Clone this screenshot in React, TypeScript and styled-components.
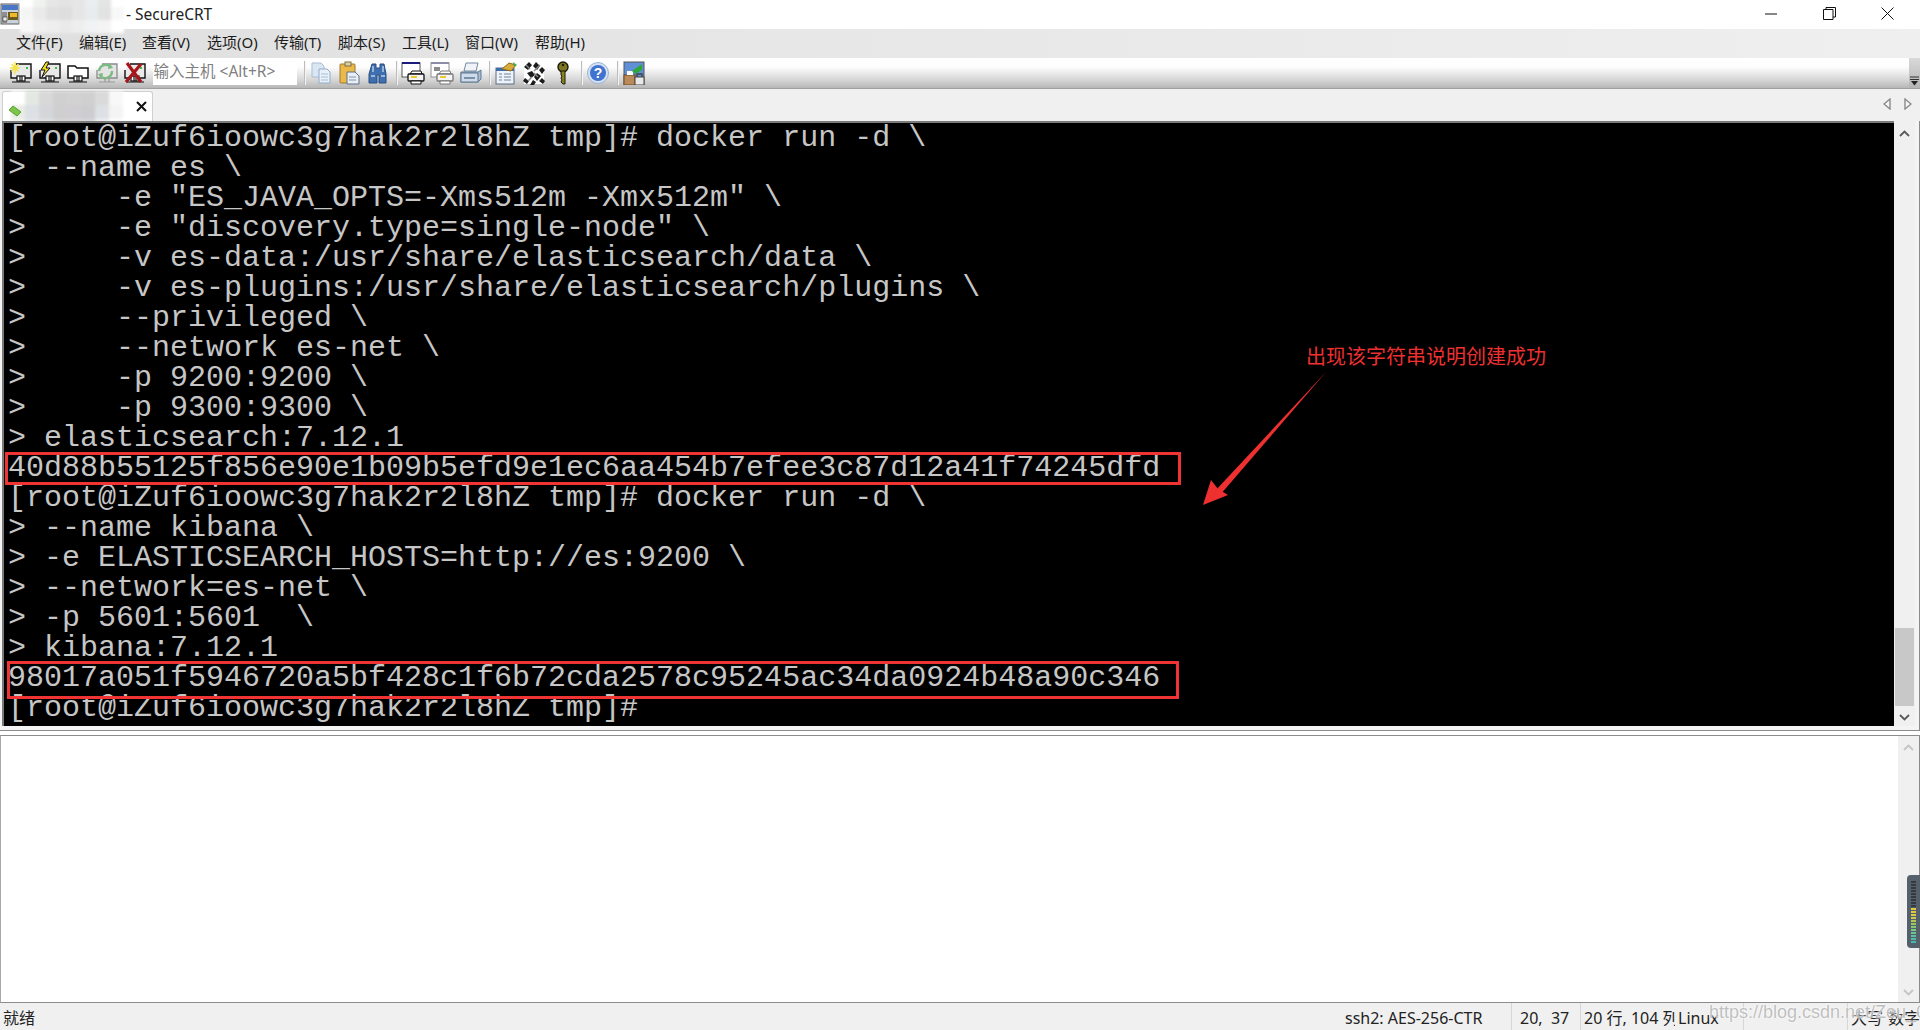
import React from 'react';
import styled, { createGlobalStyle } from 'styled-components';

const UI_FONT = `"Noto Sans", "Noto Sans CJK SC", "Liberation Sans", sans-serif`;

const GlobalStyle = createGlobalStyle`
  html, body { margin: 0; padding: 0; background: #fff; }
  #root { width: 1920px; height: 1030px; overflow: hidden; }
`;

const Root = styled.div`
  position: relative;
  display: flex;
  flex-direction: column;
  width: 1920px;
  height: 1030px;
  overflow: hidden;
  font-family: ${UI_FONT};
  color: #222;
  background: #fff;
`;

const TitleBar = styled.div`
  display: flex;
  align-items: center;
  height: 29px;
  flex: none;
  padding-bottom: 2px;
  box-sizing: border-box;
  background: #fff;
  font-size: 15.5px;
`;

const TitleText = styled.span`
  margin-left: 2px;
  white-space: pre;
`;

const WindowButtons = styled.div`
  display: flex;
  margin-left: auto;
  margin-right: 3px;
`;

const WindowButton = styled.div`
  display: flex;
  align-items: center;
  justify-content: center;
  width: 58.5px;
  height: 27px;
`;

const MenuBar = styled.div`
  display: flex;
  align-items: center;
  height: 29px;
  flex: none;
  box-sizing: border-box;
  padding: 0 0 5px 16px;
  background: linear-gradient(90deg, #dfdfdf 0, #e6e6e6 35%, #efefef 100%);
  font-size: 15px;
`;

const MenuItem = styled.span<{ $w: number }>`
  width: ${(p) => p.$w}px;
  white-space: nowrap;
  color: #1c1c1c;
`;

const ToolBar = styled.div`
  display: flex;
  align-items: center;
  position: relative;
  height: 31px;
  flex: none;
  box-sizing: border-box;
  padding-left: 7px;
  background: linear-gradient(180deg, #fff 0, #fdfdfd 30%, #d4d4d4 75%, #b6b6b6 100%);
  border-bottom: 1px solid #a0a0a0;
`;

const Tool = styled.div`
  display: flex;
  align-items: center;
  justify-content: center;
  flex: none;
  width: 28.5px;
  height: 28px;
`;

const HostInput = styled.div`
  display: flex;
  align-items: center;
  box-sizing: border-box;
  flex: none;
  width: 144px;
  height: 23px;
  margin: 0 3px 0 3px;
  padding: 0 0 5px 1px;
  background: #fff;
  color: #808080;
  font-size: 15.5px;
  white-space: pre;
`;

const ToolSep = styled.div`
  flex: none;
  width: 1px;
  height: 24px;
  margin: 0 2px 0 4px;
  background: #bdbdbd;
  box-shadow: 1px 0 0 #f4f4f4;
`;

const Grip = styled.div`
  display: flex;
  align-items: flex-end;
  justify-content: center;
  width: 11px;
  height: 30px;
  margin-left: auto;
  padding-bottom: 2px;
  box-sizing: border-box;
  background: linear-gradient(180deg, #d9d9d9, #b4b4b4);
`;

const TabStrip = styled.div`
  display: flex;
  align-items: flex-end;
  height: 32px;
  flex: none;
  box-sizing: border-box;
  padding: 0 0 2px 2px;
  background: #f0f0f0;
`;

const Tab = styled.div`
  position: relative;
  display: flex;
  align-items: center;
  box-sizing: border-box;
  width: 151px;
  height: 30px;
  margin-bottom: -2px;
  border: 1px solid #cfcfcf;
  border-bottom: none;
  border-radius: 3px 3px 0 0;
  background: #fff;
`;

const TabNav = styled.div`
  display: flex;
  align-items: center;
  gap: 13px;
  margin-left: auto;
  margin-right: 8px;
  height: 30px;
`;

const Mosaic = styled.div<{ $cols: number; $cell: number }>`
  display: grid;
  grid-template-columns: repeat(${(p) => p.$cols}, ${(p) => p.$cell}px);
  grid-auto-rows: ${(p) => p.$cell}px;
  flex: none;
  filter: blur(1.5px);
`;

const MosaicCell = styled.div<{ $c: string }>`
  background: ${(p) => p.$c};
`;

const TabMosaic = styled.div`
  position: absolute;
  left: 8px;
  top: -1px;
`;

const TabClose = styled.div`
  position: absolute;
  left: 133px;
  top: 9px;
  display: flex;
`;

const TabIcon = styled.div`
  position: absolute;
  left: 5px;
  top: 13px;
  display: flex;
`;

const TermPane = styled.div`
  display: flex;
  height: 610px;
  flex: none;
  box-sizing: border-box;
  padding: 0 0 4px 3px;
  background: #f4f4f4;
  border-bottom: 1px solid #8c8c8c;
  border-right: 1px solid #8c8c8c;
`;

const Terminal = styled.div`
  position: relative;
  flex: 1;
  box-sizing: border-box;
  padding-left: 5px;
  background: #000;
  border-top: 2px solid #7a7a7a;
  border-left: 2px solid #7a7a7a;
  margin-left: -1px;
  overflow: hidden;
`;

const TermLine = styled.div`
  height: 30px;
  margin-left: -1px;
  font-family: "Liberation Mono", "DejaVu Sans Mono", monospace;
  font-size: 30px;
  line-height: 30px;
  color: #c6c6c6;
  white-space: pre;
`;

const RedBox = styled.div<{ $x: number; $y: number; $w: number; $h: number }>`
  position: absolute;
  left: ${(p) => p.$x}px;
  top: ${(p) => p.$y}px;
  width: ${(p) => p.$w}px;
  height: ${(p) => p.$h}px;
  box-sizing: border-box;
  border: 3.5px solid #f03434;
`;

const Note = styled.div`
  position: absolute;
  left: 1302px;
  top: 219px;
  font-family: "Noto Sans CJK SC", sans-serif;
  font-size: 20px;
  line-height: 28px;
  color: #ee3030;
  white-space: nowrap;
`;

const NoteArrow = styled.svg`
  position: absolute;
  left: 1196px;
  top: 238px;
`;

const ScrollTrack = styled.div`
  position: relative;
  display: flex;
  flex-direction: column;
  align-items: center;
  justify-content: space-between;
  box-sizing: border-box;
  flex: none;
  background: #f0f0f0;
`;

const TermScroll = styled(ScrollTrack)`
  width: 21px;
  margin-right: 4px;
  padding: 7px 0 5px;
  border-top: 2px solid #f0f0f0;
`;

const Thumb = styled.div`
  position: absolute;
  left: 1px;
  right: 1px;
  top: 505px;
  height: 78px;
  background: #c8c8c8;
`;

const BottomPane = styled.div`
  display: flex;
  justify-content: flex-end;
  margin-top: 4px;
  height: 268px;
  flex: none;
  box-sizing: border-box;
  background: #fff;
  border: 1px solid #8c8c8c;
  border-left: 1px solid #a8a8a8;
  border-right: 1px solid #8c8c8c;
`;

const BottomScroll = styled(ScrollTrack)`
  width: 21px;
  padding: 8px 0 6px;
  background: #f0f0f0;
`;

const Meter = styled.div`
  position: absolute;
  left: 1907px;
  top: 875px;
  display: flex;
  flex-direction: column;
  justify-content: center;
  gap: 1px;
  box-sizing: border-box;
  width: 13px;
  height: 73px;
  padding-left: 4px;
  background: #56606a;
  border-radius: 4px 0 0 4px;
`;

const MeterTick = styled.div<{ $c: string }>`
  width: 5px;
  height: 2px;
  background: ${(p) => p.$c};
`;

const StatusBar = styled.div`
  display: flex;
  align-items: center;
  flex: 1;
  background: #f0f0f0;
  font-size: 16px;
  color: #222;
`;

const StatusCell = styled.div<{ $w?: number; $sep?: boolean; $pad?: number }>`
  flex: ${(p) => (p.$w ? `0 0 ${p.$w}px` : '1')};
  box-sizing: border-box;
  height: 27px;
  line-height: 25px;
  padding-top: 3px;
  padding-left: ${(p) => p.$pad ?? 3}px;
  overflow: hidden;
  white-space: pre;
  border-left: ${(p) => (p.$sep ? '1px solid #d6d6d6' : 'none')};
`;

const Watermark = styled.div`
  position: absolute;
  left: 1709px;
  top: 1000px;
  font-family: "Liberation Sans", sans-serif;
  font-size: 18px;
  line-height: 24px;
  color: rgba(170, 170, 170, 0.75);
  text-shadow: 0 0 2px #fff, 0 0 2px #fff;
  white-space: nowrap;
`;

const Chevron = ({ up, color = '#5a5a5a' }: { up?: boolean; color?: string }) => (
  <svg width="11" height="7" viewBox="0 0 11 7">
    <path
      d={up ? 'M1 6 5.5 1.5 10 6' : 'M1 1 5.5 5.5 10 1'}
      fill="none"
      stroke={color}
      strokeWidth="1.8"
    />
  </svg>
);

const Plug = () => (
  <g>
    <rect x="8" y="15" width="8" height="5" fill="#fff" stroke="#111" strokeWidth="1.2" />
    <path d="M3 21H21M11 15v5M13 15v5" stroke="#111" strokeWidth="1.2" />
  </g>
);

const Drive = () => (
  <g>
    <path d="M7 3H22V17H2V9" fill="#e9e9e9" stroke="#111" strokeWidth="1.4" />
    <rect x="17" y="6" width="2" height="2" fill="#39c24a" />
    <Plug />
  </g>
);

const IconBox = ({ children }: { children: React.ReactNode }) => (
  <svg width="24" height="24" viewBox="0 0 24 24">
    {children}
  </svg>
);

const QuickConnect = () => (
  <IconBox>
    <Drive />
    <path d="M6 1v12M1 7h10M2.5 3l7 7.5M9.5 3l-7 7.5" stroke="#f2e34a" strokeWidth="1.5" />
  </IconBox>
);

const Connect = () => (
  <IconBox>
    <Drive />
    <path d="M8 1 3 9h4l-3 7 8-9H8l3-6z" fill="#f4e020" stroke="#111" strokeWidth="1" />
  </IconBox>
);

const Folder = () => (
  <IconBox>
    <path d="M2 17V5h7l2 2h11v10z" fill="#fff" stroke="#111" strokeWidth="1.5" />
    <Plug />
  </IconBox>
);

const Reconnect = () => (
  <IconBox>
    <path d="M7 3H22V17H2V9" fill="#e4e4e4" stroke="#8a8a8a" strokeWidth="1.3" />
    <path d="M4 10a7 7 0 0 1 12-4M17 10a7 7 0 0 1-12 5" fill="none" stroke="#7cbb83" strokeWidth="2.4" />
    <path d="M14 2l4 5-5 1zM7 18l-4-5 5-1z" fill="#7cbb83" />
    <path d="M10 17v4M14 17v4M4 21h16" stroke="#999" strokeWidth="1.2" />
  </IconBox>
);

const Disconnect = () => (
  <IconBox>
    <Drive />
    <path d="M4 2 18 21M18 3 3 21" stroke="#a8161b" strokeWidth="3.2" />
  </IconBox>
);

const Copy = () => (
  <IconBox>
    <path d="M3 2h9l3 3v11H3z" fill="#dbe6f3" stroke="#a8bdd6" />
    <path d="M10 8h8l3 3v11H10z" fill="#e8f0f9" stroke="#8fabc9" />
    <path d="M12 13h7M12 16h7M12 19h7" stroke="#a8c0da" />
  </IconBox>
);

const Paste = () => (
  <IconBox>
    <rect x="3" y="3" width="15" height="19" rx="1" fill="#eab94a" stroke="#9c7a28" />
    <rect x="8" y="1" width="6" height="4" fill="#d8d0b0" stroke="#80703a" />
    <path d="M10 11h8l4 4v8H10z" fill="#e8eef5" stroke="#5c7086" />
    <path d="M12 16h7M12 19h7" stroke="#8094aa" />
  </IconBox>
);

const Find = () => (
  <IconBox>
    <path d="M6 3h4v4h4V3h4l2 10v9h-7v-8h-2v8H3v-9z" fill="#3f6fae" stroke="#2b4e80" />
    <path d="M5 15h4M15 15h4M7 5v6M17 5v6" stroke="#bcd2ea" strokeWidth="1.4" />
  </IconBox>
);

const PrintWindow = ({ faded }: { faded?: boolean }) => (
  <IconBox>
    <rect x="1" y="2" width="18" height="14" fill="#fff" stroke={faded ? '#909090' : '#555'} />
    <rect x="1" y="1" width="18" height="2" fill={faded ? '#8d8da8' : '#1b1b7c'} />
    {faded && <path d="M4 6h6v4H4z" fill="#8a8a8a" />}
    <path d="M9 13l2-3h9l1 3z" fill="#fff" stroke={faded ? '#777' : '#111'} />
    <rect x="7" y="13" width="16" height="7" rx="1" fill="#f4f4f4" stroke={faded ? '#777' : '#111'} strokeWidth="1.3" />
    <rect x="10" y="15" width="6" height="2" fill="#e9c92e" />
    <path d="M10 20h10v3H10z" fill="#fff" stroke={faded ? '#777' : '#111'} />
  </IconBox>
);

const Printer = () => (
  <IconBox>
    <path d="M8 2h12l-2 8H6z" fill="#f0f4f9" stroke="#7288a0" />
    <path d="M3 11h17l3-2v9l-3 3H3z" fill="#a9bdd2" stroke="#5f7891" />
    <rect x="3" y="12" width="17" height="9" fill="#cfdbe8" stroke="#5f7891" />
    <rect x="6" y="16" width="11" height="2" fill="#7a90a8" />
  </IconBox>
);

const Options = () => (
  <IconBox>
    <rect x="2" y="7" width="18" height="16" fill="#eef3f9" stroke="#5a6c82" />
    <rect x="2" y="7" width="18" height="3" fill="#3d6ea8" />
    <path d="M5 13h3M10 13h7M5 16h3M10 16h7M5 19h3M10 19h7" stroke="#6d86a2" />
    <path d="M8 8 15 2l7 2-5 6z" fill="#d9ab38" stroke="#8b6b1c" />
    <path d="M19 1l4 3-3 2z" fill="#4ba64e" />
  </IconBox>
);

const MapKeys = () => (
  <IconBox>
    <rect x="2" y="1" width="20" height="22" fill="#fff" />
    <path
      d="M2 6 7 1l3 3-4 5zM14 1l4 4-3 4-4-4zM20 6l3 3-3 4-3-4zM5 12l5-2 3 4-4 3zM15 12l4 3-4 5-3-4zM3 17l4 3-2 3-4-3zM11 19l3 2-2 3h-4zM20 17l3 3-2 3-4-3z"
      fill="#1c1c1c"
    />
    <path d="M4 4l4 4M12 12l4 4M18 4l-6 6M10 16l-4 4" stroke="#8a8a8a" strokeWidth="1.4" />
  </IconBox>
);

const KeyIcon = () => (
  <IconBox>
    <ellipse cx="12" cy="6" rx="5" ry="5" fill="#7d7522" stroke="#1c1a08" strokeWidth="1.4" />
    <circle cx="12" cy="4" r="1.2" fill="#1c1a08" />
    <path d="M10 10h4v13h-2l-2-2 1-2-1-2 1-2-1-1z" fill="#8b8226" stroke="#1c1a08" />
  </IconBox>
);

const Help = () => (
  <svg width="24" height="24" viewBox="0 0 24 24">
    <circle cx="12" cy="12" r="10.5" fill="#d5e2f5" stroke="#9cb3d6" />
    <circle cx="12" cy="12" r="8" fill="#3f73cf" />
    <text x="12" y="17" textAnchor="middle" fontFamily="Liberation Sans, sans-serif" fontWeight="700" fontSize="14" fill="#fff">
      ?
    </text>
  </svg>
);

const Lock = () => (
  <IconBox>
    <rect x="2" y="1" width="20" height="23" fill="#5f8fd6" stroke="#555" />
    <rect x="2" y="14" width="11" height="10" fill="#bb8a58" stroke="#6b4a28" />
    <path d="M5 10h6v4H5z" fill="#fff" />
    <path d="M10 10 20 3v6l-7 4z" fill="#2ea83a" />
    <rect x="13" y="16" width="9" height="8" fill="#e8e8e8" stroke="#444" />
    <path d="M15 16v-3h5v3" fill="none" stroke="#444" strokeWidth="1.4" />
  </IconBox>
);

const GripArrow = () => (
  <svg width="9" height="10" viewBox="0 0 9 10">
    <path d="M0 1h9M0 3.5h9" stroke="#333" />
    <path d="M1 5h7L4.5 9.5z" fill="#222" />
  </svg>
);

const NavArrow = ({ right }: { right?: boolean }) => (
  <svg width="8" height="12" viewBox="0 0 8 12">
    <path
      d={right ? 'M1 1 7 6 1 11z' : 'M7 1 1 6 7 11z'}
      fill="#f6f6f6"
      stroke="#8a8a8a"
      strokeWidth="1.4"
    />
  </svg>
);

const AppIcon = () => (
  <svg width="20" height="22" viewBox="0 0 20 22">
    <rect x="1" y="1" width="18" height="20" fill="#c9d2da" stroke="#5c5c5c" />
    <rect x="2" y="2" width="16" height="5" fill="#4b78c4" />
    <rect x="2" y="9" width="5" height="11" fill="#8f8f8f" />
    <rect x="8" y="9" width="10" height="8" fill="#6d5a1e" />
    <rect x="10" y="10" width="7" height="4" fill="#f0bb2a" />
    <rect x="3" y="14" width="4" height="4" fill="#eee" stroke="#333" strokeWidth=".6" />
  </svg>
);

const TabStatusIcon = () => (
  <svg width="14" height="12" viewBox="0 0 14 12">
    <path d="M1 5 5 1l8 6-4 4z" fill="#7cc44a" stroke="#5aa032" />
  </svg>
);

const MENU: [string, number][] = [
  ['文件(F)', 63],
  ['编辑(E)', 63],
  ['查看(V)', 65],
  ['选项(O)', 67],
  ['传输(T)', 64],
  ['脚本(S)', 64],
  ['工具(L)', 63],
  ['窗口(W)', 70],
  ['帮助(H)', 70],
];

const PROMPT = '[root@iZuf6ioowc3g7hak2r2l8hZ tmp]#';

const LINES = [
  `${PROMPT} docker run -d \\`,
  '> --name es \\',
  '>     -e "ES_JAVA_OPTS=-Xms512m -Xmx512m" \\',
  '>     -e "discovery.type=single-node" \\',
  '>     -v es-data:/usr/share/elasticsearch/data \\',
  '>     -v es-plugins:/usr/share/elasticsearch/plugins \\',
  '>     --privileged \\',
  '>     --network es-net \\',
  '>     -p 9200:9200 \\',
  '>     -p 9300:9300 \\',
  '> elasticsearch:7.12.1',
  '40d88b55125f856e90e1b09b5efd9e1ec6aa454b7efee3c87d12a41f74245dfd',
  `${PROMPT} docker run -d \\`,
  '> --name kibana \\',
  '> -e ELASTICSEARCH_HOSTS=http://es:9200 \\',
  '> --network=es-net \\',
  '> -p 5601:5601  \\',
  '> kibana:7.12.1',
  '98017a051f5946720a5bf428c1f6b72cda2578c95245ac34da0924b48a90c346',
  `${PROMPT} `,
];

const TITLE_CELLS = [
  '#fff', '#f0f2f0', '#e6e6e6', '#e3e3e3', '#e6e6e6', '#ebeef0', '#e4e4e4', '#fff',
  '#f4f6f4', '#eaeaea', '#e0e0e0', '#dedede', '#e6e6e6', '#e8ecef', '#e2e2e2', '#f8f8f8',
  '#f8f8f8', '#f0f0f0', '#eeeeee', '#eaeaea', '#eeeeee', '#f0f2f4', '#f4f4f4', '#fff',
];

const TAB_CELLS = [
  '#fff', '#e4e8e2', '#d8d8d8', '#d0d0d0', '#d2d2d2', '#d0d0d0', '#dadada', '#f8f8f8',
  '#e8ece4', '#dde0e4', '#d4d6da', '#cfcfcf', '#d0ced2', '#cdcdd0', '#dde0e4', '#f4f4f4',
  '#f4f6f0', '#e4e6ea', '#e0e2e4', '#d8d8da', '#d8d8dc', '#d8d8dc', '#f0f0f2', '#fff',
];

const METER = [
  '#333a42', '#333a42', '#333a42', '#333a42', '#333a42', '#333a42', '#333a42', '#333a42', '#333a42',
  '#e0c840', '#e0c840', '#d8cc48', '#c8cc50', '#b0c858', '#98c860', '#88c870', '#78c880',
  '#68c490', '#58c0a0', '#50bca8', '#48b8b0',
];

const Row = ({ text }: { text: string }) => <TermLine>{text}</TermLine>;

export default function App() {
  return (
    <Root>
      <GlobalStyle />
      <TitleBar>
        <AppIcon />
        <Mosaic $cols={8} $cell={13}>
          {TITLE_CELLS.map((c, i) => (
            <MosaicCell key={i} $c={c} />
          ))}
        </Mosaic>
        <TitleText>- SecureCRT</TitleText>
        <WindowButtons>
          <WindowButton>
            <svg width="12" height="2" viewBox="0 0 12 2">
              <path d="M0 1h12" stroke="#111" />
            </svg>
          </WindowButton>
          <WindowButton>
            <svg width="13" height="13" viewBox="0 0 13 13">
              <path d="M.5 2.5h9.5v10H.5zM3 2.5V.5h9.5V10H10" fill="none" stroke="#111" />
            </svg>
          </WindowButton>
          <WindowButton>
            <svg width="13" height="13" viewBox="0 0 13 13">
              <path d="M.5.5l12 12M12.5.5l-12 12" stroke="#111" />
            </svg>
          </WindowButton>
        </WindowButtons>
      </TitleBar>

      <MenuBar>
        {MENU.map(([label, w]) => (
          <MenuItem key={label} $w={w}>
            {label}
          </MenuItem>
        ))}
      </MenuBar>

      <ToolBar>
        <Tool><QuickConnect /></Tool>
        <Tool><Connect /></Tool>
        <Tool><Folder /></Tool>
        <Tool><Reconnect /></Tool>
        <Tool><Disconnect /></Tool>
        <HostInput>输入主机 {'<Alt+R>'}</HostInput>
        <ToolSep />
        <Tool><Copy /></Tool>
        <Tool><Paste /></Tool>
        <Tool><Find /></Tool>
        <ToolSep />
        <Tool><PrintWindow /></Tool>
        <Tool><PrintWindow faded /></Tool>
        <Tool><Printer /></Tool>
        <ToolSep />
        <Tool><Options /></Tool>
        <Tool><MapKeys /></Tool>
        <Tool><KeyIcon /></Tool>
        <ToolSep />
        <Tool><Help /></Tool>
        <ToolSep />
        <Tool><Lock /></Tool>
        <Grip>
          <GripArrow />
        </Grip>
      </ToolBar>

      <TabStrip>
        <Tab>
          <TabMosaic>
            <Mosaic $cols={8} $cell={14}>
              {TAB_CELLS.map((c, i) => (
                <MosaicCell key={i} $c={c} />
              ))}
            </Mosaic>
          </TabMosaic>
          <TabIcon>
            <TabStatusIcon />
          </TabIcon>
          <TabClose>
            <svg width="11" height="11" viewBox="0 0 11 11">
              <path d="M1 1l9 9M10 1l-9 9" stroke="#111" strokeWidth="2" />
            </svg>
          </TabClose>
        </Tab>
        <TabNav>
          <NavArrow />
          <NavArrow right />
        </TabNav>
      </TabStrip>

      <TermPane>
        <Terminal>
          {LINES.map((line, i) => (
            <Row key={i} text={line} />
          ))}
          <RedBox $x={1} $y={329} $w={1176} $h={33} />
          <RedBox $x={3} $y={538} $w={1172} $h={38} />
          <Note>出现该字符串说明创建成功</Note>
          <NoteArrow width="160" height="150" viewBox="0 0 160 150">
            <path d="M126 136" fill="none" />
            <path d="M126 11 20 134l-5-4z" fill="#ee3030" />
            <path d="M3 144 11 119l7 9 10 6z" fill="#ee3030" />
          </NoteArrow>
        </Terminal>
        <TermScroll>
          <Chevron up />
          <Thumb />
          <Chevron />
        </TermScroll>
      </TermPane>

      <BottomPane>
        <BottomScroll>
          <Chevron up color="#c4c4c4" />
          <Chevron color="#c4c4c4" />
        </BottomScroll>
      </BottomPane>

      <StatusBar>
        <StatusCell>就绪</StatusCell>
        <StatusCell $w={166} $pad={0}>ssh2: AES-256-CTR</StatusCell>
        <StatusCell $w={69} $sep $pad={8}>20,  37</StatusCell>
        <StatusCell $w={95} $sep>20 行, 104 列</StatusCell>
        <StatusCell $w={68} $pad={3}>Linux</StatusCell>
        <StatusCell $w={104} $sep />
        <StatusCell $w={38} $sep>大写</StatusCell>
        <StatusCell $w={35}>数字</StatusCell>
      </StatusBar>

      <Meter>
        {METER.map((c, i) => (
          <MeterTick key={i} $c={c} />
        ))}
      </Meter>
      <Watermark>https://blog.csdn.net/Zeu_05</Watermark>
    </Root>
  );
}
